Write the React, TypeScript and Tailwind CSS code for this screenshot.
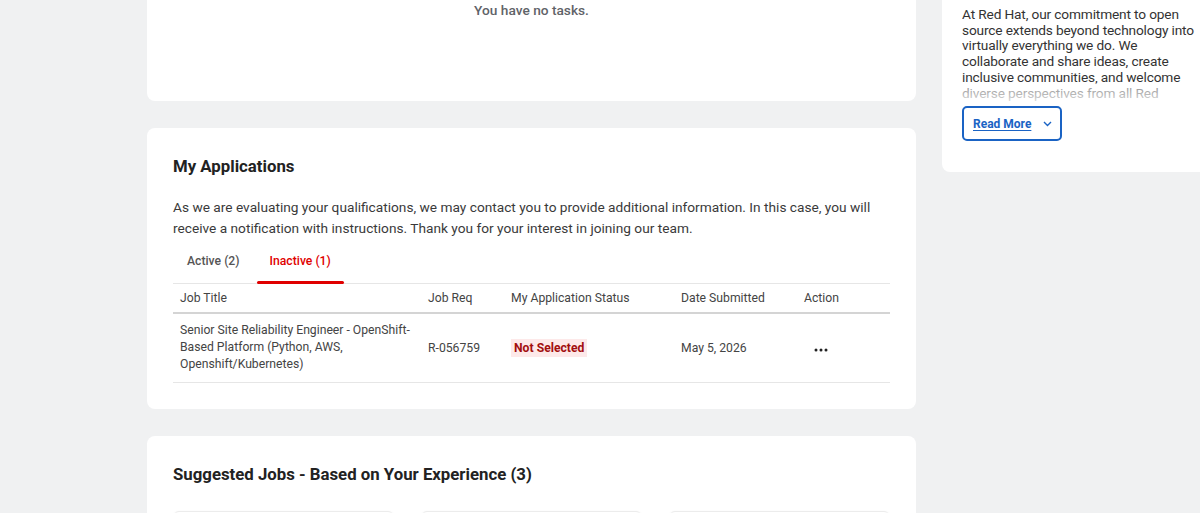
import React from "react";

type Application = {
  title: string;
  req: string;
  status: string;
  submitted: string;
};

const inactive: Application[] = [
  {
    title:
      "Senior Site Reliability Engineer - OpenShift-Based Platform (Python, AWS, Openshift/Kubernetes)",
    req: "R-056759",
    status: "Not Selected",
    submitted: "May 5, 2026",
  },
];

// collapsed preview of the about blurb, last line fades out
const aboutLines = [
  "At Red Hat, our commitment to open",
  "source extends beyond technology into",
  "virtually everything we do. We",
  "collaborate and share ideas, create",
  "inclusive communities, and welcome",
  "diverse perspectives from all Red",
];

const Dots = () => (
  <svg width="14" height="4" viewBox="0 0 14 4" fill="#222">
    <circle cx="2" cy="2" r="1.5" />
    <circle cx="7" cy="2" r="1.5" />
    <circle cx="12" cy="2" r="1.5" />
  </svg>
);

const Chevron = () => (
  <svg width="9" height="6" viewBox="0 0 9 6" fill="none" stroke="#1a63c4" strokeWidth="1.4">
    <path d="M1 1l3.5 3.5L8 1" />
  </svg>
);

const TasksCard = () => (
  <div className="bg-white rounded-lg h-[141px] pt-[40px] text-center">
    <p className="text-[13.7px] leading-[20px] font-medium text-[#5f6368]">You have no tasks.</p>
  </div>
);

const ApplicationsCard = () => (
  <div className="bg-white rounded-lg h-[281px] px-[26px] pt-[26px]">
    <h2 className="text-[16.8px] leading-[24px] font-bold text-[#222]">My Applications</h2>
    <p className="mt-[19px] text-[13.7px] leading-[21px] text-[#3a3a3a]">
      As we are evaluating your qualifications, we may contact you to provide additional
      information. In this case, you will receive a notification with instructions. Thank you for
      your interest in joining our team.
    </p>

    <div className="flex gap-[3px] border-b border-[#e6e6e6] mt-[1px]">
      <button className="h-[43px] px-[14px] text-[12.2px] font-medium text-[#555]">Active (2)</button>
      <button className="relative h-[43px] px-[13px] text-[12.2px] font-medium text-[#e00000]">
        Inactive (1)
        <span className="absolute left-0 right-0 bottom-[-1px] h-[3px] rounded-full bg-[#e00000]" />
      </button>
    </div>

    <table className="w-full table-fixed text-left text-[12.2px]">
      <colgroup>
        <col className="w-[248px]" />
        <col className="w-[83px]" />
        <col className="w-[170px]" />
        <col className="w-[123px]" />
        <col />
      </colgroup>
      <thead>
        <tr className="border-b-2 border-[#d4d4d4] text-[#444]">
          <th className="font-normal pl-[7px] h-[29px]">Job Title</th>
          <th className="font-normal px-[7px]">Job Req</th>
          <th className="font-normal px-[7px]">My Application Status</th>
          <th className="font-normal px-[7px]">Date Submitted</th>
          <th className="font-normal px-[7px]">Action</th>
        </tr>
      </thead>
      <tbody>
        {inactive.map((a) => (
          <tr key={a.req} className="border-b border-[#e6e6e6] text-[#444]">
            <td className="pl-[7px] h-[69px] leading-[17px]">{a.title}</td>
            <td className="px-[7px]">{a.req}</td>
            <td className="px-[7px]">
              <span className="bg-[#fde9e9] text-[#a30f0f] font-bold px-[3px] py-[2px]">
                {a.status}
              </span>
            </td>
            <td className="px-[7px]">{a.submitted}</td>
            <td className="px-[7px]">
              <span className="ml-[10px] inline-flex">
                <Dots />
              </span>
            </td>
          </tr>
        ))}
      </tbody>
    </table>
  </div>
);

const SuggestedCard = () => (
  <div className="bg-white rounded-lg px-[26px] pt-[26px] h-[200px]">
    <h2 className="text-[16.8px] leading-[24px] font-bold text-[#222]">
      Suggested Jobs - Based on Your Experience (3)
    </h2>
    <div className="grid grid-cols-3 gap-[27px] mt-[25px]">
      {[0, 1, 2].map((i) => (
        <div
          key={i}
          className="h-[120px] rounded-md border border-[#ececec] shadow-[0_1px_3px_rgba(0,0,0,0.08)]"
        />
      ))}
    </div>
  </div>
);

const AboutCard = () => (
  <div className="bg-white rounded-lg w-[290px] h-[212px] px-[20px] pt-[47px] shrink-0">
    <div className="relative h-[94px] overflow-hidden">
      <p className="text-[13.7px] leading-[15.7px] tracking-[-0.15px] text-[#333]">
        {aboutLines.map((line) => (
          <span key={line} className="block whitespace-nowrap">
            {line}
          </span>
        ))}
      </p>
      <div className="absolute left-0 right-0 bottom-0 h-[18px] bg-gradient-to-b from-white/40 to-white/80" />
    </div>
    <button className="mt-[5px] h-[35px] w-[100px] rounded-[5px] border-2 border-[#1a63c4] flex items-center pl-[9px] gap-[12px]">
      <span className="text-[12px] font-bold text-[#1a63c4] underline underline-offset-2">
        Read More
      </span>
      <Chevron />
    </button>
  </div>
);

export default function App() {
  return (
    <div
      className="h-[513px] w-[1200px] overflow-hidden bg-[#f0f1f2]"
      style={{ fontFamily: "Roboto, 'Noto Sans', sans-serif" }}
    >
      <div className="flex items-start gap-[26px] pl-[147px] -mt-[40px]">
        <div className="w-[769px] shrink-0 flex flex-col gap-[27px]">
          <TasksCard />
          <ApplicationsCard />
          <SuggestedCard />
        </div>
        <AboutCard />
      </div>
    </div>
  );
}
